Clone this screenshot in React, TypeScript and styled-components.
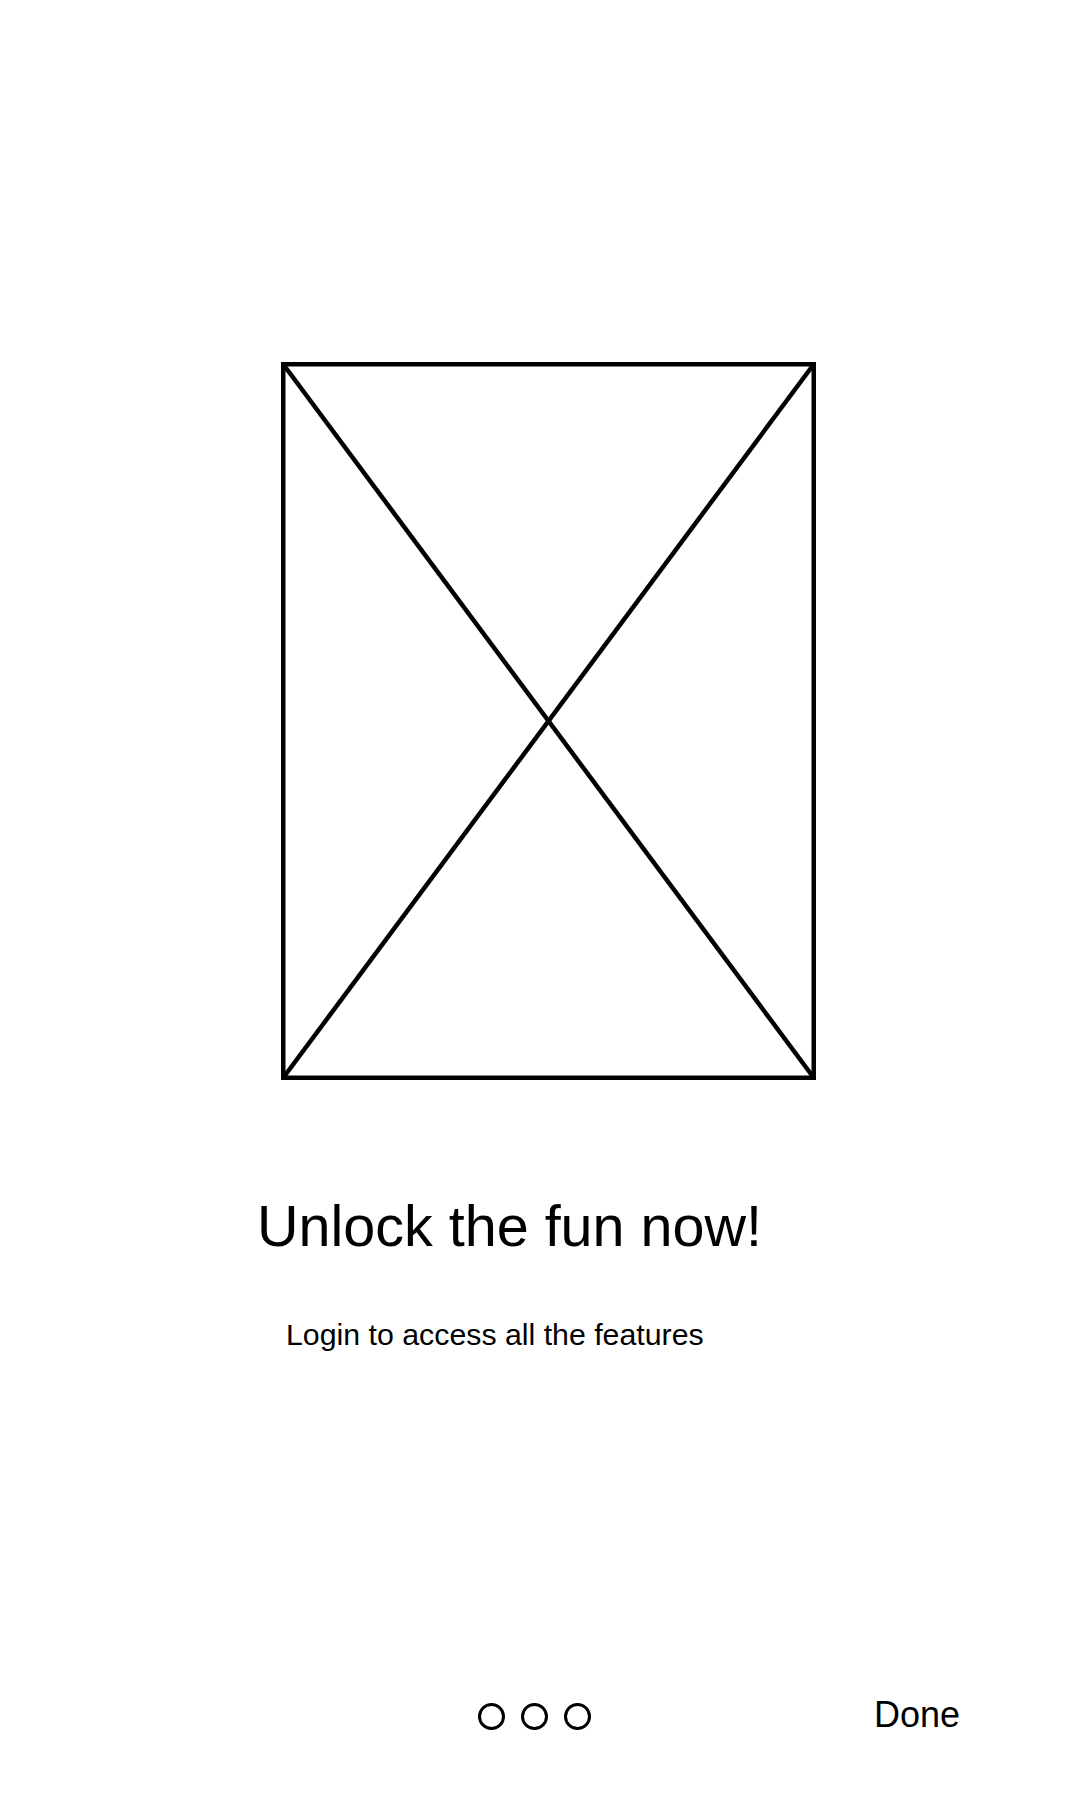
import styled, { createGlobalStyle } from "styled-components";

const GlobalStyle = createGlobalStyle`
  html, body {
    margin: 0;
    padding: 0;
    background: #fff;
  }
  body {
    font-family: "Liberation Sans", Arial, sans-serif;
    color: #000;
  }
`;

const Screen = styled.div`
  width: 1080px;
  height: 1800px;
  display: flex;
  flex-direction: column;
  background: #fff;
  box-sizing: border-box;
  padding-top: 362px;
`;

const Placeholder = styled.svg`
  display: block;
  margin-left: 281px;
  flex-shrink: 0;
`;

const Title = styled.h1`
  margin: 118px 0 0 257px;
  font-size: 57.5px;
  line-height: 1;
  font-weight: 400;
`;

const Subtitle = styled.p`
  margin: 64px 0 0 286px;
  font-size: 30.3px;
  line-height: 1;
`;

const Footer = styled.div`
  margin-top: auto;
  margin-bottom: 54px;
  height: 60px;
  display: flex;
  align-items: center;
  padding: 0 120px 0 478px;
`;

const Dots = styled.div`
  display: flex;
  gap: 16px;
`;

const Dot = styled.span<{ $active?: boolean }>`
  width: 27px;
  height: 27px;
  box-sizing: border-box;
  border: 3px solid #000;
  border-radius: 50%;
  background: ${(p) => (p.$active ? "#000" : "transparent")};
`;

const DoneButton = styled.button`
  margin-left: auto;
  margin-bottom: 3px;
  border: none;
  background: none;
  padding: 0;
  font-family: "Liberation Sans", Arial, sans-serif;
  font-size: 36px;
  line-height: 1;
  color: #000;
  cursor: pointer;
`;

export default function App() {
  const w = 535;
  const h = 718;
  const s = 4.5;
  const o = s / 2;
  return (
    <>
      <GlobalStyle />
      <Screen>
        <Placeholder width={w} height={h} viewBox={`0 0 ${w} ${h}`}>
          <rect x={o} y={o} width={w - s} height={h - s} fill="none" stroke="#000" strokeWidth={s} />
          <line x1={o} y1={o} x2={w - o} y2={h - o} stroke="#000" strokeWidth={s} />
          <line x1={w - o} y1={o} x2={o} y2={h - o} stroke="#000" strokeWidth={s} />
        </Placeholder>
        <Title>Unlock the fun now!</Title>
        <Subtitle>Login to access all the features</Subtitle>
        <Footer>
          <Dots>
            <Dot />
            <Dot />
            <Dot />
          </Dots>
          <DoneButton>Done</DoneButton>
        </Footer>
      </Screen>
    </>
  );
}
